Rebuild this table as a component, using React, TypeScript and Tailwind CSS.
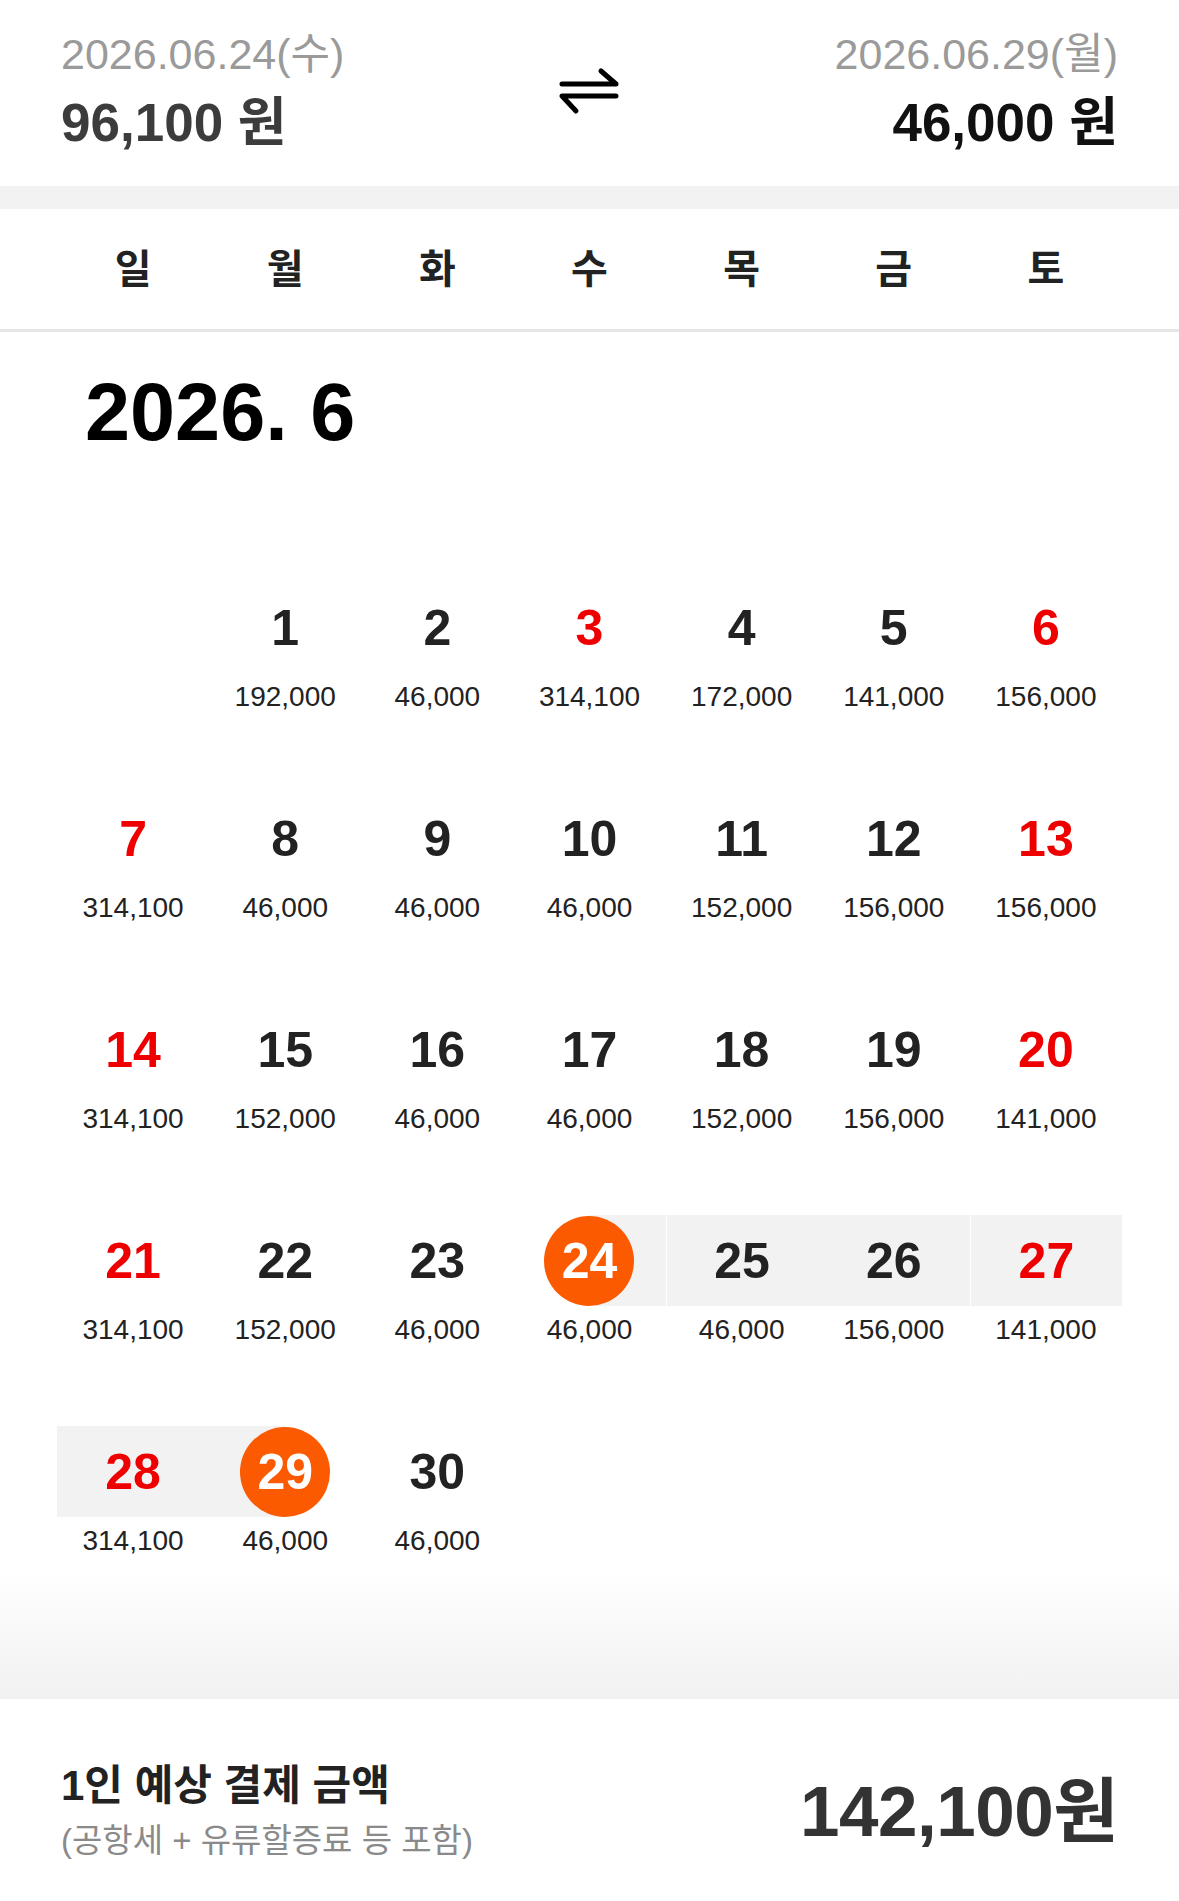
import { clsx } from "clsx";

type Day = {
  day: number;
  price: string;
  red?: boolean;
  range?: "start" | "mid" | "end";
  split?: boolean;
};

const weekdays = ["일", "월", "화", "수", "목", "금", "토"];

const weeks: (Day | null)[][] = [
  [
    null,
    { day: 1, price: "192,000" },
    { day: 2, price: "46,000" },
    { day: 3, price: "314,100", red: true },
    { day: 4, price: "172,000" },
    { day: 5, price: "141,000" },
    { day: 6, price: "156,000", red: true },
  ],
  [
    { day: 7, price: "314,100", red: true },
    { day: 8, price: "46,000" },
    { day: 9, price: "46,000" },
    { day: 10, price: "46,000" },
    { day: 11, price: "152,000" },
    { day: 12, price: "156,000" },
    { day: 13, price: "156,000", red: true },
  ],
  [
    { day: 14, price: "314,100", red: true },
    { day: 15, price: "152,000" },
    { day: 16, price: "46,000" },
    { day: 17, price: "46,000" },
    { day: 18, price: "152,000" },
    { day: 19, price: "156,000" },
    { day: 20, price: "141,000", red: true },
  ],
  [
    { day: 21, price: "314,100", red: true },
    { day: 22, price: "152,000" },
    { day: 23, price: "46,000" },
    { day: 24, price: "46,000", range: "start" },
    { day: 25, price: "46,000", range: "mid", split: true },
    { day: 26, price: "156,000", range: "mid" },
    { day: 27, price: "141,000", red: true, range: "mid", split: true },
  ],
  [
    { day: 28, price: "314,100", red: true, range: "mid" },
    { day: 29, price: "46,000", range: "end" },
    { day: 30, price: "46,000" },
    null,
    null,
    null,
    null,
  ],
];

const SwapIcon = () => (
  <svg width="62" height="50" viewBox="0 0 62 50" fill="none">
    <path
      d="M4 18H58L43 5M58 30H4L18 45"
      stroke="#000"
      strokeWidth="5"
      strokeLinecap="round"
      strokeLinejoin="round"
    />
  </svg>
);

const DayCell = ({ d }: { d: Day | null }) => {
  if (!d) return <div />;
  const selected = d.range === "start" || d.range === "end";
  return (
    <div className="flex flex-col items-center">
      <div
        className={clsx(
          "flex h-[91px] w-full items-center justify-center",
          d.range === "mid" && "bg-[#f2f2f2]",
          d.range === "start" &&
            "bg-[linear-gradient(to_right,transparent_50%,#f2f2f2_50%)]",
          d.range === "end" &&
            "bg-[linear-gradient(to_right,#f2f2f2_50%,transparent_50%)]",
          d.split && "border-l border-white"
        )}
      >
        {selected ? (
          <span className="flex size-[90px] items-center justify-center rounded-full bg-[#fb5a00] text-[50px] font-bold leading-none text-white">
            {d.day}
          </span>
        ) : (
          <span
            className={clsx(
              "text-[50px] font-bold leading-none",
              d.red ? "text-[#ee0000]" : "text-[#222]"
            )}
          >
            {d.day}
          </span>
        )}
      </div>
      <span className="mt-[7px] text-[28px] leading-[34px] text-[#222]">
        {d.price}
      </span>
    </div>
  );
};

export default function App() {
  return (
    <div className="w-[1179px] bg-white font-[family-name:Liberation_Sans,Noto_Sans_CJK_KR,sans-serif]">
      {/* route summary */}
      <div className="grid h-[186px] grid-cols-3 px-[61px] pt-[29px]">
        <div className="flex flex-col gap-[14px]">
          <span className="text-[43px] leading-[50px] text-[#9a9a9a]">
            2026.06.24(수)
          </span>
          <span className="text-[53px] font-bold leading-[60px] text-[#3c3c3c]">
            96,100 원
          </span>
        </div>
        <div className="flex justify-center pt-[37px]">
          <SwapIcon />
        </div>
        <div className="flex flex-col items-end gap-[14px]">
          <span className="text-[43px] leading-[50px] text-[#9a9a9a]">
            2026.06.29(월)
          </span>
          <span className="text-[53px] font-bold leading-[60px] text-[#111]">
            46,000 원
          </span>
        </div>
      </div>
      <div className="h-[23px] bg-[#f2f2f2]" />

      {/* weekdays */}
      <div className="grid h-[123px] grid-cols-7 border-b-[3px] border-[#e6e6e6] px-[57px]">
        {weekdays.map((w) => (
          <div
            key={w}
            className="flex items-center justify-center text-[40px] font-bold text-[#222]"
          >
            {w}
          </div>
        ))}
      </div>

      {/* month */}
      <div className="pb-[11px] pt-[40px]">
        <h2 className="pl-[85px] text-[81px] font-bold leading-none text-black">
          2026. 6
        </h2>
        <div className="mt-[129px] flex flex-col gap-[79px] px-[57px]">
          {weeks.map((week, i) => (
            <div key={i} className="grid grid-cols-7">
              {week.map((d, j) => (
                <DayCell key={j} d={d} />
              ))}
            </div>
          ))}
        </div>
      </div>
      <div className="h-[130px] bg-gradient-to-b from-white to-[#f1f1f1]" />

      {/* total */}
      <div className="flex h-[201px] items-center justify-between px-[61px] pt-[24px]">
        <div className="flex flex-col gap-[11px]">
          <span className="text-[42px] font-bold leading-[48px] text-[#222]">
            1인 예상 결제 금액
          </span>
          <span className="text-[33px] leading-[40px] text-[#8a8a8a]">
            (공항세 + 유류할증료 등 포함)
          </span>
        </div>
        <span className="text-[71px] font-bold leading-none tracking-[-0.5px] text-[#333]">
          142,100원
        </span>
      </div>
    </div>
  );
}
